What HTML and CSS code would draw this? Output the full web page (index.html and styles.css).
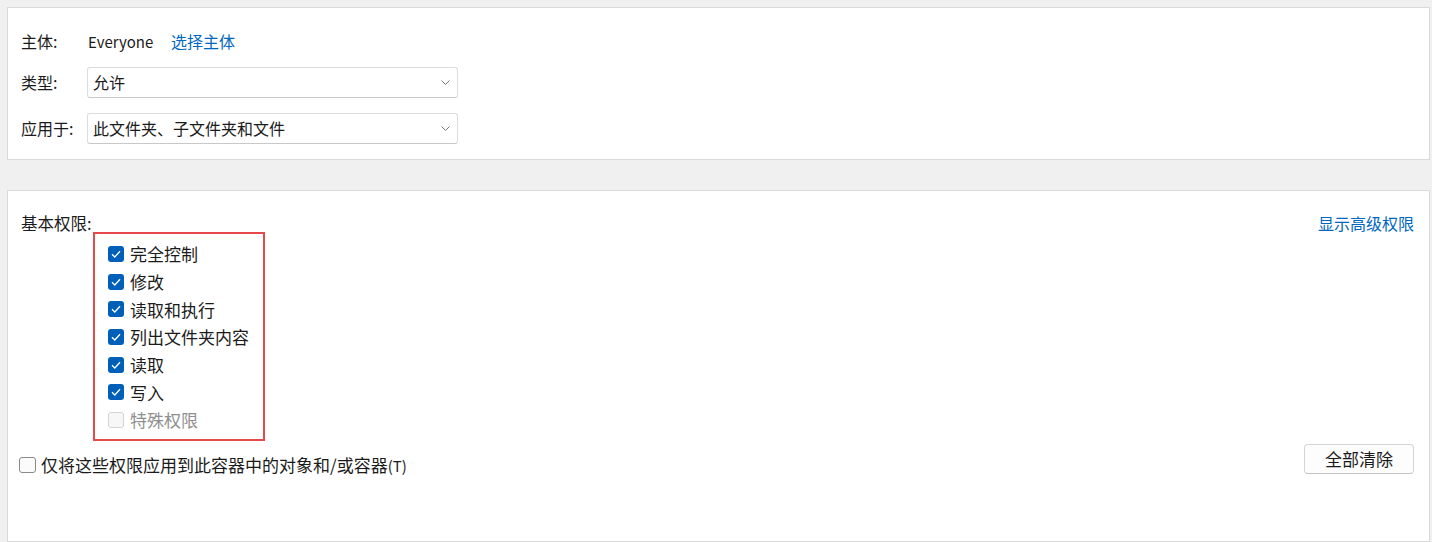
FILE: index.html
```html
<!DOCTYPE html>
<html lang="zh-CN">
<head>
<meta charset="utf-8">
<link rel="stylesheet" href="styles.css">
</head>
<body>
<div class="page">
  <section class="panel panel-top">
    <div class="row row-principal">
      <span class="label">主体:</span>
      <span class="value">Everyone</span>
      <a class="link">选择主体</a>
    </div>
    <div class="row row-select">
      <span class="label">类型:</span>
      <div class="select"><span>允许</span>
        <svg class="chev" width="9" height="5" viewBox="0 0 9 5"><path d="M0.5 0.5 L4.5 4.5 L8.5 0.5" fill="none" stroke="#777" stroke-width="1"/></svg>
      </div>
    </div>
    <div class="row row-select row-apply">
      <span class="label">应用于:</span>
      <div class="select"><span>此文件夹、子文件夹和文件</span>
        <svg class="chev" width="9" height="5" viewBox="0 0 9 5"><path d="M0.5 0.5 L4.5 4.5 L8.5 0.5" fill="none" stroke="#777" stroke-width="1"/></svg>
      </div>
    </div>
  </section>

  <section class="panel panel-bottom">
    <div class="perm-head">
      <span class="perm-title">基本权限:</span>
      <a class="link">显示高级权限</a>
    </div>
    <div class="perm-box">
      <div class="perm"><span class="cb checked"><svg width="10" height="8" viewBox="0 0 10 8"><path d="M1 4.2 L3.8 7 L9 1.2" fill="none" stroke="#fff" stroke-width="1.3"/></svg></span><span>完全控制</span></div>
      <div class="perm"><span class="cb checked"><svg width="10" height="8" viewBox="0 0 10 8"><path d="M1 4.2 L3.8 7 L9 1.2" fill="none" stroke="#fff" stroke-width="1.3"/></svg></span><span>修改</span></div>
      <div class="perm"><span class="cb checked"><svg width="10" height="8" viewBox="0 0 10 8"><path d="M1 4.2 L3.8 7 L9 1.2" fill="none" stroke="#fff" stroke-width="1.3"/></svg></span><span>读取和执行</span></div>
      <div class="perm"><span class="cb checked"><svg width="10" height="8" viewBox="0 0 10 8"><path d="M1 4.2 L3.8 7 L9 1.2" fill="none" stroke="#fff" stroke-width="1.3"/></svg></span><span>列出文件夹内容</span></div>
      <div class="perm"><span class="cb checked"><svg width="10" height="8" viewBox="0 0 10 8"><path d="M1 4.2 L3.8 7 L9 1.2" fill="none" stroke="#fff" stroke-width="1.3"/></svg></span><span>读取</span></div>
      <div class="perm"><span class="cb checked"><svg width="10" height="8" viewBox="0 0 10 8"><path d="M1 4.2 L3.8 7 L9 1.2" fill="none" stroke="#fff" stroke-width="1.3"/></svg></span><span>写入</span></div>
      <div class="perm disabled"><span class="cb off"></span><span>特殊权限</span></div>
    </div>
    <div class="perm-foot">
      <label class="apply-only"><span class="cb empty"></span><span>仅将这些权限应用到此容器中的对象和/或容器<span class="mn">(T)</span></span></label>
      <button class="btn">全部清除</button>
    </div>
  </section>
</div>
</body>
</html>
```

FILE: styles.css
```css
* { box-sizing: border-box; }
html, body { margin: 0; height: 100%; }
body {
  background: #f0f0f0;
  font-family: "Noto Sans CJK SC", "Noto Sans", sans-serif;
  font-size: 16px;
  color: #1b1b1b;
  overflow: hidden;
}
.page {
  display: flex;
  flex-direction: column;
  gap: 30px;
  padding: 7px 2px 0 7px;
  height: 100%;
}
.panel {
  background: #fff;
  border: 1px solid #d9d9d9;
}
.panel-top {
  height: 153px;
  padding: 18px 0 0 13px;
  display: flex;
  flex-direction: column;
}
.panel-bottom {
  flex: 1;
  padding: 21px 15px 0 13px;
}
.row {
  display: flex;
  align-items: center;
  height: 30px;
}
.label { width: 66px; flex: none; }
.value { margin-left: 1px; width: 83px; font-size: 15px; }
.link { color: #0067c0; cursor: pointer; }
.row-select { margin-top: 11px; }
.row-apply { margin-top: 16px; }
.select {
  width: 371px;
  height: 31px;
  border: 1px solid #dcdcdc;
  border-bottom-color: #c8c8c8;
  border-radius: 3px;
  display: flex;
  align-items: center;
  justify-content: space-between;
  padding: 0 7px 0 5px;
}
.chev { display: block; }
.perm-head {
  display: flex;
  justify-content: space-between;
  align-items: center;
  height: 22px;
}
.perm-title { font-size: 16.5px; }
.perm-box {
  margin: -2px 0 0 72px;
  width: 172px;
  border: 2px solid #e5494c;
  padding: 6px 0 5px 13px;
}
.perm {
  display: flex;
  align-items: center;
  gap: 6px;
  height: 27.7px;
  font-size: 17px;
}
.cb {
  width: 16px;
  height: 16px;
  border-radius: 3px;
  display: flex;
  align-items: center;
  justify-content: center;
  flex: none;
}
.cb.checked { background: #005fb8; }
.cb.off { border: 1px solid #d4d4d4; background: #f7f7f7; }
.cb.empty { border: 1px solid #8a8a8a; background: #fbfbfb; width: 17px; }
.perm.disabled { color: #8f8f8f; }
.perm-foot {
  display: flex;
  justify-content: space-between;
  align-items: flex-start;
  margin-top: 3px;
}
.apply-only {
  display: flex;
  align-items: center;
  gap: 5px;
  margin: 13px 0 0 -2px;
  height: 16px;
  font-size: 17px;
}
.mn { font-size: 15px; }
.btn {
  width: 110px;
  height: 30px;
  border: 1px solid #d5d5d5;
  border-bottom-color: #c2c2c2;
  border-radius: 4px;
  background: #fdfdfd;
  font: inherit;
  font-size: 17px;
  color: #1b1b1b;
  padding: 0;
}
```
